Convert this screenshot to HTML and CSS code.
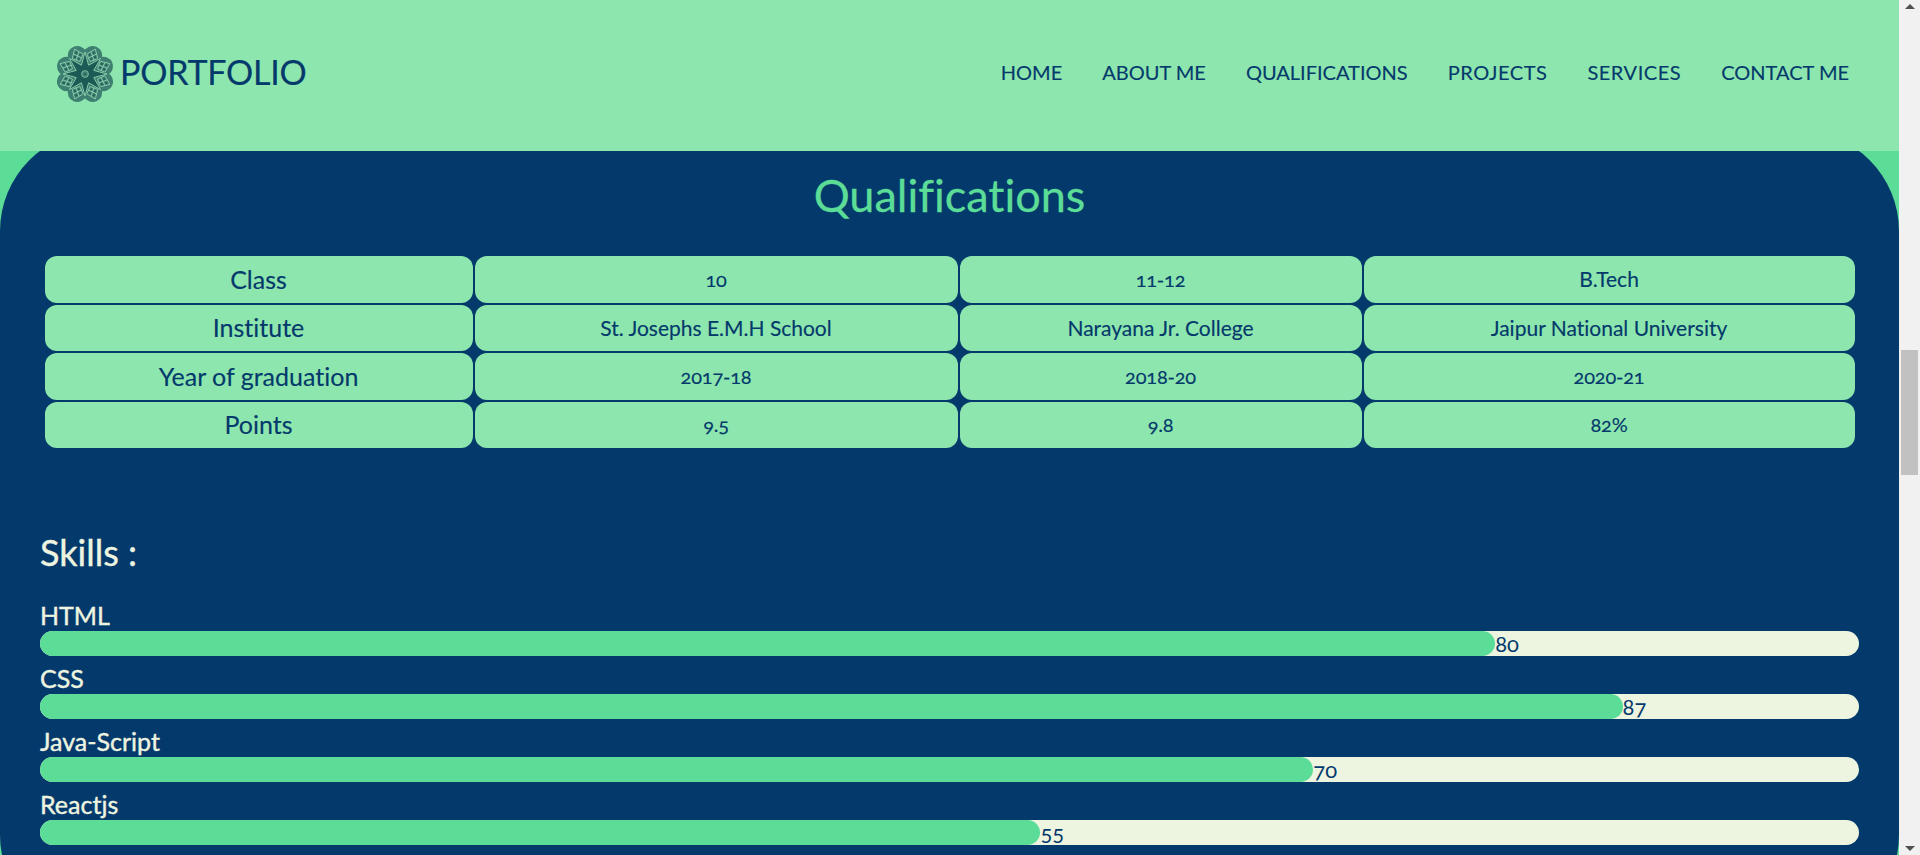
FILE: index.html
```html
<!DOCTYPE html>
<html lang="en">
<head>
<meta charset="utf-8">
<title>Portfolio</title>
<link rel="stylesheet" href="styles.css">
</head>
<body>
<div class="window">
  <div class="page">
    <nav class="nav">
      <a class="brand" href="#">
        <svg class="logo" viewBox="-30 -30 60 60" aria-hidden="true">
          <defs>
            <filter id="soft" x="-10%" y="-10%" width="120%" height="120%"><feGaussianBlur stdDeviation="0.4"/></filter>
            <g id="lobe">
              <circle cx="0" cy="-20" r="9.6" fill="#3d7f70"/>
              <path d="M-6 -19 L0 -13.5 L6 -19 L0 -27 Z M-3 -23 L3 -16 M3 -23 L-3 -16" fill="none" stroke="#8ed0ae" stroke-width="0.8"/>
              <circle cx="-2.8" cy="-19.5" r="0.9" fill="#1e5a56"/>
              <circle cx="2.8" cy="-19.5" r="0.9" fill="#1e5a56"/>
              <circle cx="0" cy="-23" r="0.9" fill="#1e5a56"/>
              <circle cx="0" cy="-16.5" r="0.9" fill="#1e5a56"/>
            </g>
          </defs>
          <g filter="url(#soft)">
            <circle r="23" fill="#3d7f70"/>
            <use href="#lobe" transform="rotate(22.5)"/>
            <use href="#lobe" transform="rotate(67.5)"/>
            <use href="#lobe" transform="rotate(112.5)"/>
            <use href="#lobe" transform="rotate(157.5)"/>
            <use href="#lobe" transform="rotate(202.5)"/>
            <use href="#lobe" transform="rotate(247.5)"/>
            <use href="#lobe" transform="rotate(292.5)"/>
            <use href="#lobe" transform="rotate(337.5)"/>
            <polygon points="0,-22 3.6,-8.8 15.6,-15.6 8.8,-3.6 22,0 8.8,3.6 15.6,15.6 3.6,8.8 0,22 -3.6,8.8 -15.6,15.6 -8.8,3.6 -22,0 -8.8,-3.6 -15.6,-15.6 -3.6,-8.8" fill="#1e5a56" stroke="#86cba9" stroke-width="1" stroke-linejoin="round"/>
            <circle r="3.4" fill="#3d7f70" stroke="#86cba9" stroke-width="0.8"/>
            <circle r="1" fill="#1e5a56"/>
          </g>
        </svg>
        <span class="brand-name">PORTFOLIO</span>
      </a>
      <ul class="menu">
        <li><a href="#">HOME</a></li>
        <li><a href="#">ABOUT ME</a></li>
        <li><a href="#">QUALIFICATIONS</a></li>
        <li><a class="wide" href="#">PROJECTS</a></li>
        <li><a class="wide" href="#">SERVICES</a></li>
        <li><a href="#">CONTACT ME</a></li>
      </ul>
    </nav>
    <main class="main">
      <h1 class="title">Qualifications</h1>
      <table class="quals">
        <colgroup>
          <col class="c1"><col class="c2"><col class="c3"><col class="c4">
        </colgroup>
        <tbody>
          <tr><th>Class</th><td class="num">10</td><td class="num">11-12</td><td>B.Tech</td></tr>
          <tr><th>Institute</th><td>St. Josephs E.M.H School</td><td>Narayana Jr. College</td><td>Jaipur National University</td></tr>
          <tr><th>Year of graduation</th><td class="num">2017-18</td><td class="num">2018-20</td><td class="num">2020-21</td></tr>
          <tr><th>Points</th><td class="num">9.5</td><td class="num">9.8</td><td class="num">82%</td></tr>
        </tbody>
      </table>
      <h2 class="skills-title">Skills :</h2>
      <div class="skill">
        <div class="skill-name">HTML</div>
        <div class="track"><div class="fill" style="width:80%"></div><span class="value">80</span></div>
      </div>
      <div class="skill">
        <div class="skill-name">CSS</div>
        <div class="track"><div class="fill" style="width:87%"></div><span class="value">87</span></div>
      </div>
      <div class="skill">
        <div class="skill-name">Java-Script</div>
        <div class="track"><div class="fill" style="width:70%"></div><span class="value">70</span></div>
      </div>
      <div class="skill">
        <div class="skill-name">Reactjs</div>
        <div class="track"><div class="fill" style="width:55%"></div><span class="value">55</span></div>
      </div>
    </main>
  </div>
  <aside class="scrollbar" aria-hidden="true">
    <span class="arrow arrow-up"></span>
    <span class="thumb"></span>
    <span class="arrow arrow-down"></span>
  </aside>
</div>
</body>
</html>
```
FILE: styles.css
```css
* { box-sizing: border-box; }
html, body { margin: 0; height: 855px; overflow: hidden; }
body {
  font-family: "Lato", "Open Sans", "Liberation Sans", sans-serif;
  color: #04396b;
  font-variant-numeric: oldstyle-nums;
  font-variant-ligatures: none;
}
.window { display: flex; height: 855px; overflow: hidden; }
.page { flex: 1; min-width: 0; background: #5cdd97; overflow: hidden; }

.nav {
  position: relative;
  z-index: 2;
  height: 151px;
  background: #8de6ae;
  display: flex;
  align-items: center;
  justify-content: space-between;
  padding: 0 50px 4px 55px;
}
.brand { display: flex; align-items: center; gap: 5px; color: #04396b; text-decoration: none; }
.logo { width: 60px; height: 60px; display: block; }
.brand-name { font-size: 34px; line-height: 40px; letter-spacing: -0.25px; -webkit-text-stroke: 0.2px #04396b; margin-top: -3px; }
.menu { list-style: none; margin: 0 0 3px; padding: 0; display: flex; gap: 40px; }
.menu a { color: #04396b; text-decoration: none; font-size: 20px; line-height: 24px; display: block; -webkit-text-stroke: 0.15px #04396b; }
.menu a.wide { letter-spacing: 0.55px; }

.main {
  margin-top: -20px;
  height: 804px;
  background: #04396b;
  border-radius: 100px;
  padding: 34px 40px 0;
}
.title {
  margin: 0;
  text-align: center;
  font-size: 45px;
  line-height: 60px;
  font-weight: 400;
  color: #5cdd97;
  -webkit-text-stroke: 0.3px #5cdd97;
}
.quals {
  width: 1814px;
  margin: 29px auto 0;
  border-collapse: separate;
  border-spacing: 2px;
  table-layout: fixed;
}
.c1 { width: 428px; }
.c2 { width: 483px; }
.c3 { width: 402px; }
.c4 { width: 491px; }
.quals th, .quals td {
  height: 46.5px;
  padding: 0 0 1px;
  background: #8de6ae;
  border-radius: 12px;
  text-align: center;
  font-weight: 400;
  color: #04396b;
  -webkit-text-stroke: 0.15px #04396b;
}
.quals th { font-size: 25px; }
.quals td { font-size: 21px; }
.quals td.num { font-size: 20px; letter-spacing: -0.2px; }

.skills-title {
  margin: 82px 0 21px;
  font-size: 36px;
  line-height: 40px;
  font-weight: 400;
  color: #edf4e0;
  -webkit-text-stroke: 0.4px #edf4e0;
}
.skill-name {
  padding-top: 7px;
  padding-bottom: 1px;
  font-size: 25px;
  line-height: 30px;
  color: #edf4e0;
  -webkit-text-stroke: 0.4px #edf4e0;
}
.track {
  display: flex;
  align-items: center;
  height: 25px;
  background: #edf4e0;
  border-radius: 13px;
}
.fill { height: 25px; background: #5cdd97; border-radius: 13px; }
.value { font-size: 22px; line-height: 25px; color: #04396b; }

.scrollbar {
  width: 21px;
  flex: none;
  background: #f1f1f1;
  display: flex;
  flex-direction: column;
  align-items: center;
}
.arrow { width: 0; height: 0; border-left: 5px solid transparent; border-right: 5px solid transparent; }
.arrow-up { margin-top: 4px; border-bottom: 5px solid #505050; }
.thumb { width: 17px; height: 125px; margin-top: 341px; background: #c1c1c1; }
.arrow-down { margin-top: auto; margin-bottom: 4px; border-top: 5px solid #505050; }
```
